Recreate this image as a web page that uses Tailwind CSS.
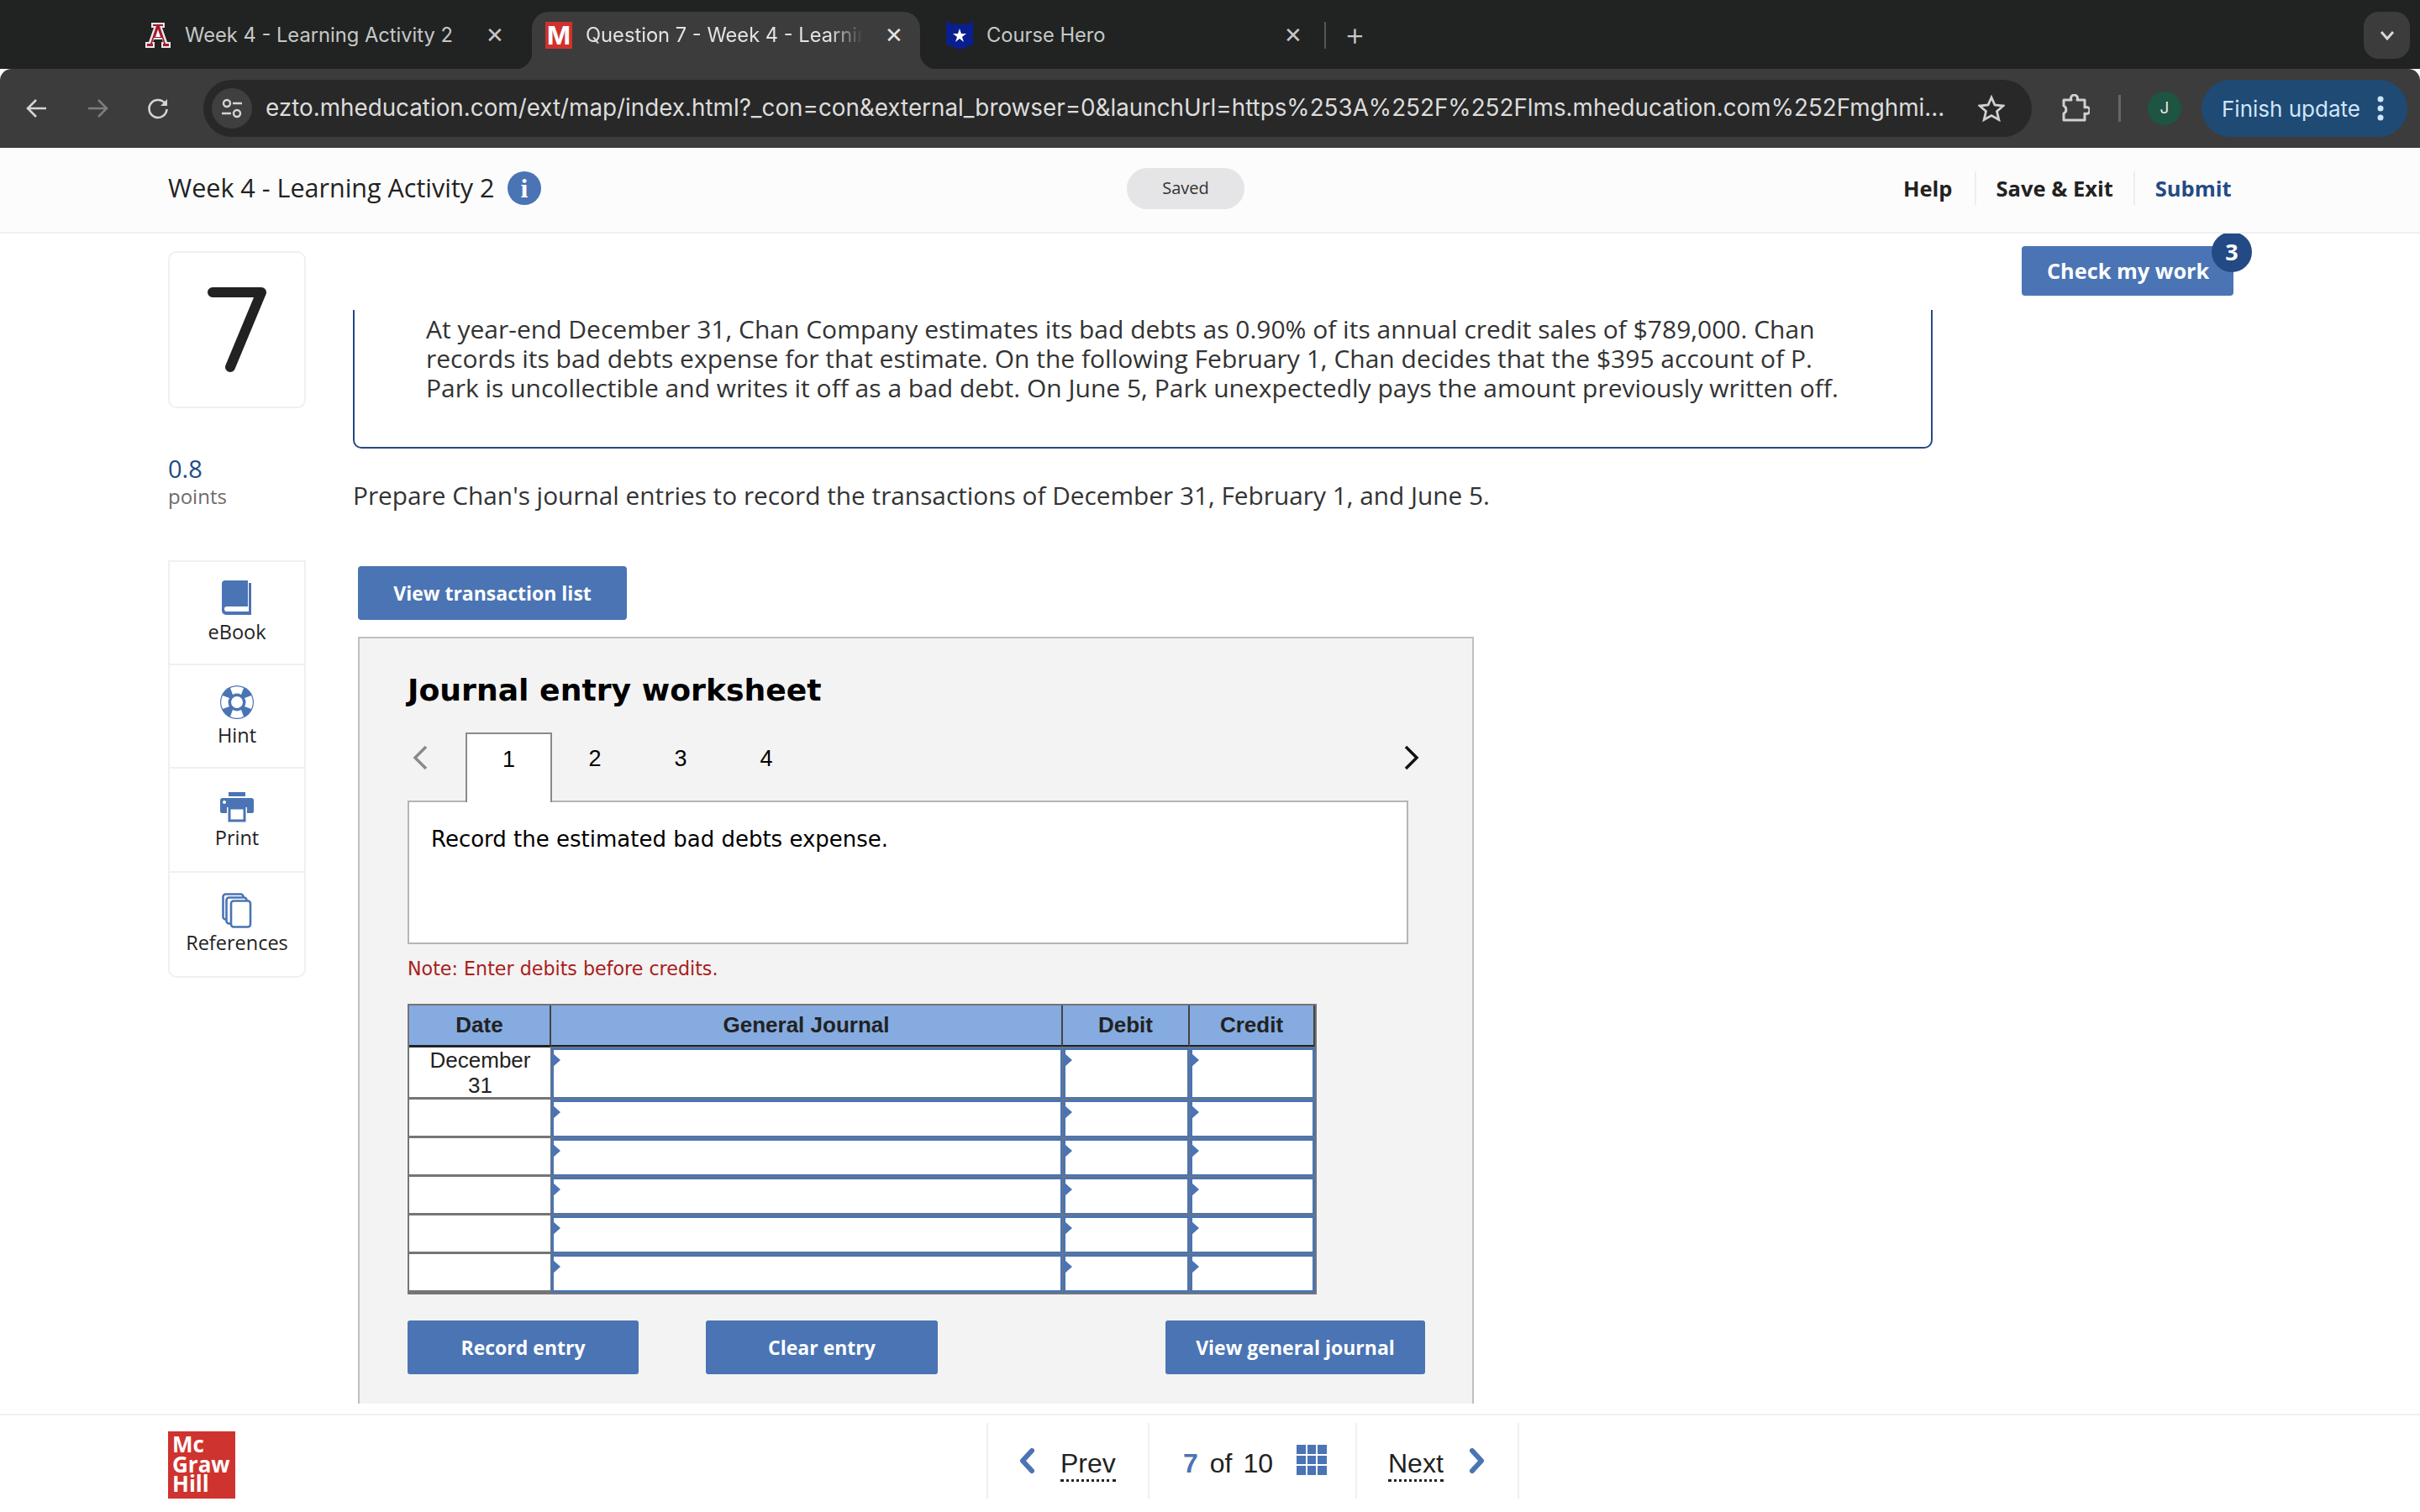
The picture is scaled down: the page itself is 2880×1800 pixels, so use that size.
<!DOCTYPE html>
<html lang="en">
<head>
    <meta charset="UTF-8">
    <title>Question 7 - Week 4 - Learning Activity 2</title>
    <script src="https://cdn.jsdelivr.net/npm/@tailwindcss/browser@4"></script>
</head>
<body class="w-[2880px] h-[1800px] overflow-hidden flex flex-col bg-white font-['Open_Sans',sans-serif] text-[#222]">
    <!-- Browser tabs -->
    <div class="h-[82px] bg-[#202322] flex items-start pt-[14px] pl-[172px] pr-[12px] text-[#c7c7c7] text-[23.700px] font-['Inter',sans-serif] shrink-0">
        <div class="w-[461px] h-[56px] flex items-center gap-[16px]">
            <svg class="w-[32px] h-[32px]" viewBox="0 0 32 32"><path d="M8 1h16v6h-3l6 17h4v7H20v-7h2l-1-3H11l-1 3h2v7H1v-7h4l6-17H8z" fill="#e8e8e8"/><path d="M10 3h12v2h-4l7 21h4v3h-7v-3h1l-2-7H11l-2 7h1v3H3v-3h4l7-21h-4z" fill="#a6192e"/><path d="M16 9l-3 9h6z" fill="#fff"/></svg>
            <span class="w-[320px] whitespace-nowrap">Week 4 - Learning Activity 2</span>
            <span class="ml-[22px] text-[26px] leading-none">✕</span>
        </div>
        <div class="relative w-[462px] h-[68px] bg-[#3c3c3c] rounded-t-[20px] flex items-start pt-[12px] pl-[16px] gap-[16px] text-[#e3e3e3]">
            <div class="absolute left-[-20px] bottom-0 w-[20px] h-[20px] bg-[radial-gradient(circle_at_0_0,#202322_20px,#3c3c3c_21px)]"></div>
            <div class="absolute right-[-20px] bottom-0 w-[20px] h-[20px] bg-[radial-gradient(circle_at_100%_0,#202322_20px,#3c3c3c_21px)]"></div>
            <div class="w-[32px] h-[32px] bg-[#d0312d] text-white font-bold text-[30px] leading-[32px] text-center">M</div>
            <span class="w-[330px] overflow-hidden whitespace-nowrap leading-[32px] [mask-image:linear-gradient(to_right,black_88%,transparent)]">Question 7 - Week 4 - Learning</span>
            <span class="ml-[10px] text-[26px] leading-[32px]">✕</span>
        </div>
        <div class="w-[560px] h-[56px] flex items-center pl-[31px] gap-[16px]">
            <svg class="w-[32px] h-[34px]" viewBox="0 0 32 34"><path d="M0 0l8 4h16l8-4v28l-16 6L0 28z" fill="#0a1f8f"/><path d="M16 9l2 6h6l-5 4 2 6-5-4-5 4 2-6-5-4h6z" fill="#fff"/></svg>
            <span class="w-[338px] whitespace-nowrap">Course Hero</span>
            <span class="text-[26px] leading-none">✕</span>
            <div class="w-[2px] h-[32px] bg-[#555] ml-[10px]"></div>
            <span class="text-[38px] leading-none font-light ml-[6px] -mt-[4px]">+</span>
        </div>
        <div class="ml-auto w-[55px] h-[56px] bg-[#3c3c3c] rounded-[18px] flex items-center justify-center">
            <svg class="w-[18px] h-[12px]" viewBox="0 0 18 12"><path d="M2 2l7 8 7-8" fill="none" stroke="#d8d8d8" stroke-width="3"/></svg>
        </div>
    </div>
    <!-- Browser toolbar -->
    <div class="h-[94px] bg-[#3c3c3c] rounded-t-[14px] flex items-center shrink-0 font-['Inter',sans-serif]">
        <svg class="ml-[30px] w-[28px] h-[28px]" viewBox="0 0 28 28"><path d="M25 14H4M13 4L3 14l10 10" fill="none" stroke="#d5d5d5" stroke-width="2.6"/></svg>
        <svg class="ml-[44px] w-[28px] h-[28px]" viewBox="0 0 28 28"><path d="M3 14h21M15 4l10 10-10 10" fill="none" stroke="#7d7d7d" stroke-width="2.6"/></svg>
        <svg class="ml-[44px] w-[28px] h-[28px]" viewBox="0 0 28 28"><path d="M23 9a10.5 10.5 0 1 0 1.5 6" fill="none" stroke="#d5d5d5" stroke-width="2.6"/><path d="M25 3v8h-8z" fill="#d5d5d5"/></svg>
        <div class="ml-[40px] w-[2176px] h-[68px] bg-[#282828] rounded-full flex items-center pl-[10px]">
            <div class="w-[48px] h-[48px] rounded-full bg-[#3f3f3f] flex items-center justify-center shrink-0">
                <svg class="w-[28px] h-[28px]" viewBox="0 0 28 28" fill="none" stroke="#d5d5d5" stroke-width="2.4"><circle cx="8" cy="8" r="4"/><path d="M15 8h11M2 20h11"/><circle cx="20" cy="20" r="4"/></svg>
            </div>
            <span class="ml-[16px] w-[2010px] shrink-0 text-[27.800px] text-[#dcdcdc] whitespace-nowrap">ezto.mheducation.com/ext/map/index.html?_con=con&amp;external_browser=0&amp;launchUrl=https%253A%252F%252Flms.mheducation.com%252Fmghmi...</span>
            <svg class="ml-[28px] w-[32px] h-[32px] shrink-0" viewBox="0 0 32 32"><path d="M16 3l4 9 10 1-7.500 6.500 2.300 10L16 24.500 7.200 29.500l2.300-10L2 13l10-1z" fill="none" stroke="#d0d0d0" stroke-width="2.800"/></svg>
        </div>
        <svg class="ml-[35px] w-[34px] h-[34px]" viewBox="0 0 34 34"><path d="M3 7h9a4 4 0 1 1 7 0h9v9a4 4 0 1 1 0 7v8H3v-8a5 5 0 0 0 0-9z" fill="none" stroke="#d0d0d0" stroke-width="3" stroke-linejoin="round"/></svg>
        <div class="ml-[34px] w-[3px] h-[32px] bg-[#666]"></div>
        <div class="ml-[32px] w-[40px] h-[40px] rounded-full bg-[#1d5442] text-[#e8e8e8] text-[19px] flex items-center justify-center">J</div>
        <div class="ml-[24px] w-[245px] h-[68px] rounded-full bg-[#1f4a73] text-[#cfe5fb] flex items-center pl-[24px] text-[26px]">
            <span class="whitespace-nowrap">Finish update</span>
            <svg class="ml-[20px] w-[8px] h-[30px]" viewBox="0 0 8 30" fill="#cfe5fb"><circle cx="4" cy="4" r="3.500"/><circle cx="4" cy="15" r="3.500"/><circle cx="4" cy="26" r="3.500"/></svg>
        </div>
    </div>
    <!-- Assignment header -->
    <header class="h-[102px] bg-[#fcfcfc] border-b-2 border-[#f0f0f0] flex items-center pl-[200px] pb-[4px] shrink-0">
        <h1 class="w-[389px] text-[30.500px] whitespace-nowrap">Week 4 - Learning Activity 2</h1>
        <div class="ml-[15px] w-[40px] h-[40px] rounded-full bg-[#4a74b4] text-white font-['Liberation_Serif',serif] font-bold text-[32px] flex items-center justify-center">i</div>
        <div class="ml-[697px] w-[140px] h-[49px] rounded-full bg-[#e5e4e6] text-[20px] flex items-center justify-center text-[#333]">Saved</div>
        <div class="ml-[784px] flex items-center text-[25.500px] font-bold h-[40px]">
            <span>Help</span>
            <div class="ml-[26px] w-[2px] h-[40px] bg-[#eeeeee]"></div>
            <span class="ml-[24px]">Save &amp; Exit</span>
            <div class="ml-[24px] w-[2px] h-[40px] bg-[#eeeeee]"></div>
            <span class="ml-[24px] text-[#244a85]">Submit</span>
        </div>
    </header>
    <!-- Question -->
    <main class="flex-1 flex overflow-hidden pl-[200px]">
        <aside class="w-[164px] shrink-0 pt-[21px]">
            <div class="h-[187px] border-2 border-[#f0f0f0] rounded-[10px] flex items-center justify-center">
                <svg class="w-[72px] h-[104px]" viewBox="0 0 72 104"><path d="M7 7h58L28 96" fill="none" stroke="#222" stroke-width="12" stroke-linecap="round" stroke-linejoin="round"/></svg>
            </div>
            <div class="mt-[54px] text-[29px] text-[#244a85] leading-[36px]">0.8</div>
            <div class="text-[24px] text-[#6b6b6b] leading-[34px] mt-[-2px]">points</div>
            <nav class="mt-[59px] h-[497px] border-2 border-[#f0f0f0] rounded-b-[10px] flex flex-col text-[23.500px]">
                <div class="h-[124px] border-b-2 border-[#f0f0f0] flex flex-col items-center pt-[22px]">
                    <svg class="w-[36px] h-[42px]" viewBox="0 0 36 42"><path d="M4 0h27v31H6a3 3 0 0 0 0 6h26V3h3v38H5a5 5 0 0 1-5-5V4a4 4 0 0 1 4-4z" fill="#4a74b4"/></svg>
                    <span class="leading-[32px] mt-[3px]">eBook</span>
                </div>
                <div class="h-[124px] border-b-2 border-[#f0f0f0] flex flex-col items-center pt-[24px]">
                    <svg class="w-[40px] h-[40px]" viewBox="0 0 40 40"><circle cx="20" cy="20" r="20" fill="#4a74b4"/><path d="M12 3a19 19 0 0 1 16 0l-3 8a10 10 0 0 0-10 0zM12 37a19 19 0 0 0 16 0l-3-8a10 10 0 0 1-10 0zM3 12a19 19 0 0 0 0 16l8-3a10 10 0 0 1 0-10zM37 12a19 19 0 0 1 0 16l-8-3a10 10 0 0 0 0-10z" fill="#fff"/><circle cx="20" cy="20" r="7" fill="#fff"/></svg>
                    <span class="leading-[32px] mt-[3px]">Hint</span>
                </div>
                <div class="h-[124px] border-b-2 border-[#f0f0f0] flex flex-col items-center pt-[28px]">
                    <svg class="w-[40px] h-[36px]" viewBox="0 0 40 36"><path d="M10 0h20v5H10z" fill="#4a74b4"/><path d="M3 7h34a3 3 0 0 1 3 3v13a2 2 0 0 1-2 2h-6v-7H8v7H2a2 2 0 0 1-2-2V10a3 3 0 0 1 3-3z" fill="#4a74b4"/><path d="M11 19h18v15H11z" fill="#fff" stroke="#4a74b4" stroke-width="3"/><circle cx="5" cy="12" r="2" fill="#fff"/></svg>
                    <span class="leading-[32px] mt-[2px]">Print</span>
                </div>
                <div class="h-[124px] flex flex-col items-center pt-[24px]">
                    <svg class="w-[36px] h-[42px]" viewBox="0 0 36 42" fill="#fff" stroke="#4a74b4" stroke-width="2.600"><rect x="1.500" y="1.500" width="24" height="30" rx="3"/><rect x="5.500" y="5.500" width="24" height="31" rx="3"/><rect x="11" y="9.500" width="23" height="31" rx="3"/></svg>
                    <span class="leading-[32px] mt-[1px]">References</span>
                </div>
            </nav>
        </aside>
        <section class="w-[1880px] ml-[56px] shrink-0 pt-[91px]">
            <div class="h-[165px] border-2 border-t-0 border-[#244a85] rounded-b-[10px] pl-[85px] pt-[1px] text-[30px] leading-[35px] text-[#333]">
                <p class="mt-[4px] w-[1700px]">At year-end December 31, Chan Company estimates its bad debts as 0.90% of its annual credit sales of $789,000. Chan records its bad debts expense for that estimate. On the following February 1, Chan decides that the $395 account of P. Park is uncollectible and writes it off as a bad debt. On June 5, Park unexpectedly pays the amount previously written off.</p>
            </div>
            <p class="mt-[36px] text-[29.800px] leading-[40px] text-[#333]">Prepare Chan's journal entries to record the transactions of December 31, February 1, and June 5.</p>
            <div class="ml-[6px] mt-[64px] w-[320px] h-[64px] bg-[#4a74b4] rounded-[4px] text-white font-bold text-[23px] flex items-center justify-center">View transaction list</div>
            <!-- Worksheet -->
            <div class="ml-[6px] mt-[20px] w-[1328px] h-[913px] bg-[#f3f3f3] border-2 border-b-0 border-[#c0c0c0] pl-[57px] pt-[38px] font-['DejaVu_Sans',sans-serif] text-black">
                <h2 class="text-[36.200px] font-bold leading-[48px]">Journal entry worksheet</h2>
                <div class="relative mt-[26px] h-[81px] flex text-[27px]">
                    <svg class="absolute left-[5px] top-[15px] w-[20px] h-[30px]" viewBox="0 0 20 30"><path d="M17 2L4 15l13 13" fill="none" stroke="#8a8a8a" stroke-width="3.500"/></svg>
                    <div class="ml-[69px] w-[103px] h-[83px] z-10 bg-white border-2 border-b-0 border-[#8a8a8a] text-center leading-[60px] font-['Liberation_Sans',sans-serif]">1</div>
                    <div class="w-[102px] text-center leading-[62px] font-['Liberation_Sans',sans-serif]">2</div>
                    <div class="w-[102px] text-center leading-[62px] font-['Liberation_Sans',sans-serif]">3</div>
                    <div class="w-[102px] text-center leading-[62px] font-['Liberation_Sans',sans-serif]">4</div>
                    <svg class="absolute left-[1185px] top-[15px] w-[20px] h-[30px]" viewBox="0 0 20 30"><path d="M3 2l13 13L3 28" fill="none" stroke="#111" stroke-width="3.500"/></svg>
                </div>
                <div class="w-[1191px] h-[171px] bg-white border-2 border-[#b5b5b5] pl-[26px] pt-[28px] text-[26px] leading-[32px]">Record the estimated bad debts expense.</div>
                <p class="mt-[14px] text-[22.200px] leading-[30px] text-[#a8201a]">Note: Enter debits before credits.</p>
                <!-- Journal table -->
                <div id="journal" class="mt-[27px] w-[1082px] grid grid-cols-[169px_609px_151px_149px] grid-rows-[50px_62px_46px_46px_46px_46px_46px] border-2 border-[#757575] bg-white font-['Liberation_Sans',sans-serif] text-[26px] text-[#222]"></div>
                <div class="relative mt-[31px] h-[64px] font-['Open_Sans',sans-serif] font-bold text-[23px] text-white">
                    <div class="absolute left-0 w-[275px] h-[64px] bg-[#4a74b4] rounded-[3px] flex items-center justify-center">Record entry</div>
                    <div class="absolute left-[355px] w-[276px] h-[64px] bg-[#4a74b4] rounded-[3px] flex items-center justify-center">Clear entry</div>
                    <div class="absolute left-[902px] w-[309px] h-[64px] bg-[#4a74b4] rounded-[3px] flex items-center justify-center">View general journal</div>
                </div>
            </div>
        </section>
        <div class="ml-[106px] mt-[15px] relative w-[252px] h-[59px] bg-[#4a74b4] rounded-[4px] text-white font-bold text-[25.300px] flex items-center pl-[30px] shrink-0">
            Check my work
            <div class="absolute right-[-22px] top-[-17px] w-[48px] h-[48px] rounded-full bg-[#244a85] flex items-center justify-center text-[27px]">3</div>
        </div>
    </main>
    <!-- Footer nav -->
    <footer class="h-[117px] border-t-2 border-[#f0f0f0] bg-white flex items-start pl-[200px] shrink-0 text-[32px] font-['Liberation_Sans',sans-serif]">
        <div class="mt-[19px] w-[80px] h-[80px] overflow-hidden bg-[#cf332f] text-white font-bold text-[26px] leading-[23.500px] pl-[5px] pt-[4px] font-['Open_Sans',sans-serif]">Mc<br>Graw<br>Hill</div>
        <div class="ml-[894px] mt-[9px] h-[90px] flex border-x-2 border-[#f0f0f0]">
            <div class="w-[190px] flex items-center pt-[8px]">
                <svg class="ml-[36px] -mt-[8px] w-[20px] h-[30px]" viewBox="0 0 20 30"><path d="M16 3L5 15l11 12" fill="none" stroke="#4a74b4" stroke-width="6" stroke-linecap="round" stroke-linejoin="round"/></svg>
                <span class="ml-[30px] leading-[38px] border-b-[3px] border-dotted border-[#222]">Prev</span>
            </div>
            <div class="w-[247px] border-l-2 border-[#f0f0f0] flex items-center pt-[6px]">
                <span class="ml-[40px] font-bold text-[#4a74b4]">7</span>
                <span class="ml-[14px]">of</span>
                <span class="ml-[13px]">10</span>
                <div class="ml-[28px] w-[36px] h-[36px] grid grid-cols-3 gap-[2px] -mt-[8px]">
                    <i class="bg-[#4a74b4]"></i><i class="bg-[#4a74b4]"></i><i class="bg-[#4a74b4]"></i>
                    <i class="bg-[#4a74b4]"></i><i class="bg-[#4a74b4]"></i><i class="bg-[#4a74b4]"></i>
                    <i class="bg-[#4a74b4]"></i><i class="bg-[#4a74b4]"></i><i class="bg-[#4a74b4]"></i>
                </div>
            </div>
            <div class="w-[193px] border-l-2 border-[#f0f0f0] flex items-center pt-[8px]">
                <span class="ml-[37px] leading-[38px] border-b-[3px] border-dotted border-[#222]">Next</span>
                <svg class="ml-[30px] -mt-[8px] w-[20px] h-[30px]" viewBox="0 0 20 30"><path d="M4 3l11 12L4 27" fill="none" stroke="#4a74b4" stroke-width="6" stroke-linecap="round" stroke-linejoin="round"/></svg>
            </div>
        </div>
    </footer>

    <script>
        // Build the journal grid
        const journal = document.getElementById('journal');
        const headCell = 'bg-[#85abe0] font-bold border-b-[3px] border-b-[#222] border-r-2 border-r-[#444] flex items-center justify-center';
        const dateCell = 'bg-white border-b-[3px] border-[#757575] text-center leading-[30px]';
        const inputCell = 'relative bg-white border-[3px] border-[#4a74b4] outline outline-1 outline-[#757575]';
        const arrow = '<svg class="absolute left-[-1px] top-[4px] w-[10px] h-[16px]" viewBox="0 0 10 16"><path d="M0 0l9 8-9 8z" fill="#4a74b4"/></svg>';

        let html = '';
        ['Date', 'General Journal', 'Debit', 'Credit'].forEach(label => {
            html += `<div class="${headCell}">${label}</div>`;
        });
        for (let row = 0; row < 6; row++) {
            html += `<div class="${dateCell}">${row === 0 ? 'December<br>31' : ''}</div>`;
            for (let col = 0; col < 3; col++) {
                html += `<div class="${inputCell}">${arrow}</div>`;
            }
        }
        journal.innerHTML = html;
    </script>
</body>
</html>
